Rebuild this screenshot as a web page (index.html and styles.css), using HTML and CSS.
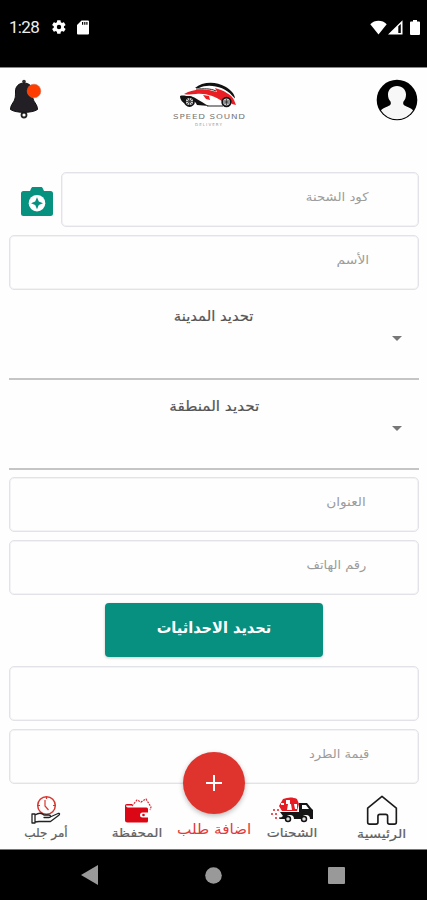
FILE: index.html
```html
<!DOCTYPE html>
<html lang="ar">
<head>
<meta charset="utf-8">
<title>Speed Sound Delivery</title>
<meta name="viewport" content="width=device-width, initial-scale=1">
<link rel="stylesheet" href="styles.css">
</head>
<body>
<div class="status">
  <span class="clock">1:28</span>
  <svg class="gear" width="16" height="16" viewBox="0 0 24 24"><path fill="#fff" fill-rule="evenodd" d="M19.4 13c.1-.7.1-1.300 0-2l2.200-1.700c.2-.1.200-.4.100-.6l-2.100-3.600c-.1-.2-.4-.3-.6-.2l-2.600 1c-.5-.4-1.100-.8-1.700-1L14.300 2.200c0-.2-.2-.4-.5-.4h-4c-.3 0-.5.2-.5.4L8.900 4.900c-.6.2-1.200.6-1.700 1l-2.600-1c-.2-.1-.5 0-.6.2L1.900 8.700c-.1.2-.1.500.1.600L4.200 11c-.1.700-.1 1.300 0 2L2 14.700c-.2.100-.2.400-.1.600L4 18.900c.1.200.4.300.6.200l2.600-1c.5.400 1.100.8 1.700 1l.4 2.700c0 .2.200.4.500.4h4c.3 0 .5-.2.500-.4l.4-2.700c.6-.2 1.200-.6 1.700-1l2.600 1c.2.100.5 0 .6-.2l2.100-3.600c.1-.2.100-.5-.1-.6zM12 15.300a3.300 3.300 0 1 1 0-6.600 3.300 3.300 0 0 1 0 6.600z"/></svg>
  <svg class="card" width="12" height="15" viewBox="0 0 12 15"><path fill="#fff" fill-rule="evenodd" d="M4.500.5H11a1 1 0 0 1 1 1V13.500a1 1 0 0 1-1 1H1a1 1 0 0 1-1-1V5zM5 2v2.800h1.200V2zm2.200 0v2.800h1.200V2zm2.100 0v2.800h1.200V2z"/></svg>
  <svg class="wifi" width="17" height="15" viewBox="0 0 17 15"><path fill="#fff" d="M8.500 14.500.3 4.300C4.500-.3 12.500-.3 16.700 4.300z"/></svg>
  <svg class="signal" width="15" height="15" viewBox="0 0 15 15"><path fill="#fff" fill-rule="evenodd" d="M0 14.500 14.500.3V14.500zM10.300 6.300V13h2.500V4z"/></svg>
  <svg class="battery" width="10" height="15" viewBox="0 0 10 15"><path fill="#fff" d="M3 0h4v1.600h2a1 1 0 0 1 1 1V14a1 1 0 0 1-1 1H1a1 1 0 0 1-1-1V2.600a1 1 0 0 1 1-1h2z"/></svg>
</div>

<header class="top">
  <svg class="bell" width="32" height="40" viewBox="0 0 32 40">
    <circle cx="14" cy="2.500" r="1.800" fill="#333"/><circle cx="14" cy="36" r="2.500" fill="none" stroke="#222" stroke-width="1.800"/>
    <path fill="#222024" stroke="#111" d="M14 4C9 4 5.500 7.500 5.500 12c0 6 0 8-2.700 12C1.200 26.500.5 28 .5 30.500c3 2 8 2.800 13.500 2.800s10.500-.8 13.500-2.800c0-2.500-.7-4-2.300-6.500C22.500 20 22.500 18 22.500 12c0-4.500-3.500-8-8.500-8z"/>
    <circle cx="24" cy="12" r="6.800" fill="#ff3d00" stroke="#d76645" stroke-width=".6"/>
  </svg>
  <div class="brand">
    <svg width="60" height="26" viewBox="0 0 60 26">
      <path fill="#111" d="M16 6C23-.5 37-1 46 4.500c6 3.500 10 8 10 12l-3-3C46 5 30 1 20 6zM1 14c3-1 6 0 7 0 8 0 12 5 22 10l-12-1c-2-5-8-7-11-1-3-1-6-4-6-8z"/>
      <path fill="#e91e24" d="M5 12C14 7 25 6 38 10l-2-4c8 2 17 7 19 12l2 5-4-1c-2-5-7-7-10-3-8-5-16-8-26-7-4 .4-8 1-12 0zM24 13l3 4 4 1-1-4z"/>
      <path fill="none" stroke="#222" d="M17 7c8 0 14-1 20 2M28 24h16"/>
      <circle cx="10.500" cy="19.500" r="4.500" fill="#ccc" stroke="#111" stroke-width="1.800"/><path stroke="#333" stroke-width=".8" d="M10.500 16v7M7 19.500h7M8 17l5 5M13 17l-5 5"/>
      <circle cx="47.500" cy="20" r="4.300" fill="#ccc" stroke="#111" stroke-width="1.800"/><path stroke="#333" stroke-width=".8" d="M47.500 17v6M44.500 20h6M45.500 18l4 4M49.500 18l-4 4"/>
    </svg>
    <span class="brand-name">SPEED SOUND</span>
    <span class="brand-sub">DELIVERY</span>
  </div>
  <svg class="avatar" width="42" height="42" viewBox="0 0 42 42"><circle cx="21" cy="21" r="20.300"/><path fill="#f7f7f7" d="M21 7c5.500 0 9 3.700 9 8.500 0 3-.8 5-2.500 7-1 3 .3 3.800 3 5 3.300 1.400 6 2.500 6.500 4a19 19 0 0 1-32 0c.5-1.500 3.200-2.600 6.500-4 2.700-1.200 4-2 3-5-1.700-2-2.500-4-2.500-7C12 10.700 15.500 7 21 7z"/></svg>
</header>

<main class="form">
  <div class="scan-row">
    <svg class="camera" width="32" height="29" viewBox="0 0 32 29"><path fill="#07917f" d="M10 1.800C10.500.6 11 0 12 0h8c1 0 1.500.6 2 1.800L23 4h6.500A2.500 2.500 0 0 1 32 6.500v20a2.500 2.500 0 0 1-2.500 2.500h-27A2.500 2.500 0 0 1 0 26.500v-20A2.500 2.500 0 0 1 2.500 4H9z"/><circle cx="16" cy="16.200" r="8.300" fill="#fff"/><path fill="#07917f" d="m16 10.200 1.800 4.200 4.200 1.800-4.200 1.800-1.800 4.200-1.800-4.200-4.200-1.800 4.200-1.800z"/></svg>
    <div class="field"><span class="hint hint-code">كود الشحنة</span></div>
  </div>
  <div class="field"><span class="hint hint-name">الأسم</span></div>
  <div class="select"><span class="label label-city">تحديد المدينة</span><i class="caret"></i></div>
  <div class="select last"><span class="label label-area">تحديد المنطقة</span><i class="caret"></i></div>
  <div class="field inset"><span class="hint hint-address">العنوان</span></div>
  <div class="field inset"><span class="hint hint-phone">رقم الهاتف</span></div>
  <div class="locate"><span class="locate-text">تحديد الاحداثيات</span></div>
  <div class="field"></div>
  <div class="field"><span class="hint hint-value">قيمة الطرد</span></div>
</main>

<nav class="tabs">
  <div class="tab">
    <svg width="30" height="30" viewBox="0 0 30 30"><circle cx="15.500" cy="10.500" r="8.800" fill="none" stroke="#d9352f" stroke-width="1.500"/><path fill="none" stroke="#d9352f" stroke-width="1.200" d="M14 5v6l3.500 4M15.500 2v2M7 10.500h2M22 10.500h2"/><path fill="#fff" stroke="#222" stroke-width="1.300" stroke-linejoin="round" d="M1 19h3v9H1zM4 20c4-2.500 7-2 9 0h5c2 0 2 2.500 0 2.500h-5 5l9-4c2-.5 2 1 .5 2l-8 6H8l-4 .5z"/></svg>
    <span class="tab-text t-pickup">أمر جلب</span>
  </div>
  <div class="tab">
    <svg width="30" height="30" viewBox="0 0 30 30"><path fill="#fff" stroke="#d62b36" stroke-width="1.200" stroke-dasharray="2 1" d="m9 11 5-6 4 2 5-3 5 8-1 3"/><path fill="#dc0714" d="M3 10.500c0 1.500 1 2 3 2h17.500a1.500 1.500 0 0 1 1.500 1.500v3.500h-5.500a2.500 2.500 0 0 0 0 5H25v3.500a1.500 1.500 0 0 1-1.500 1.500h-19A2.500 2.500 0 0 1 2 25V11c0-1.200.6-2 2-2h5v1.500z"/><circle cx="20.500" cy="20" r="1.300" fill="#dc0714"/></svg>
    <span class="tab-text t-wallet">المحفظة</span>
  </div>
  <div class="tab tab-add">
    <div class="fab"><svg width="16" height="16" viewBox="0 0 16 16"><path stroke="#fff" stroke-width="2" d="M8 0v16M0 8h16"/></svg></div>
    <span class="tab-text t-add">اضافة طلب</span>
  </div>
  <div class="tab">
    <svg width="44" height="30" viewBox="0 0 44 30"><path fill="#e51c23" d="M13 4c5-2 10-2 14 0l2 5-2 7H12l-3-5z"/><path fill="#fff" d="M16 5h4v4h-4zM18 9h3l1 6h-5zM11 8h3v2h-3zM24 9h3v5h-2z"/><path fill="none" stroke="#e51c23" stroke-width="1.500" stroke-dasharray="2 2" d="M3 15h7M1 19h7M5 23h7"/><path fill="#151515" d="M10 17h19V8h8l4 5 2 2v9h-3a4 4 0 0 0-8 0h-8a4 4 0 0 0-8 0H9l4-3z"/><path fill="#fff" d="M32 10h4l3 4h-7z"/><circle cx="18" cy="24" r="2.500" fill="#ddd" stroke="#111" stroke-width="1.500"/><circle cx="34" cy="24" r="2.500" fill="#ddd" stroke="#111" stroke-width="1.500"/></svg>
    <span class="tab-text t-ship">الشحنات</span>
  </div>
  <div class="tab">
    <svg width="32" height="31" viewBox="0 0 32 32"><path fill="none" stroke="#1b1b1b" stroke-width="1.700" stroke-linejoin="round" d="M1.200 13.500 16 1.500l14.800 12V28a2 2 0 0 1-2 2h-5a2 2 0 0 1-2-2v-6a2 2 0 0 0-2-2h-6a2 2 0 0 0-2 2v6a2 2 0 0 1-2 2h-6.600a2 2 0 0 1-2-2z"/></svg>
    <span class="tab-text t-home">الرئيسية</span>
  </div>
</nav>

<div class="system">
  <svg width="17" height="20" viewBox="0 0 17 20"><path fill="#999" d="M0 10 17 0v20z"/></svg>
  <svg width="17" height="17" viewBox="0 0 17 17"><circle cx="8.500" cy="8.500" r="8.300" fill="#999"/></svg>
  <svg width="17" height="17" viewBox="0 0 17 17"><rect width="17" height="17" rx="1" fill="#999"/></svg>
</div>
</body>
</html>
```
FILE: styles.css
```css
* { box-sizing: border-box; }
body {
  margin: 0;
  width: 427px;
  height: 900px;
  overflow: hidden;
  display: flex;
  flex-direction: column;
  background: #fefefe;
  font-family: "DejaVu Sans", sans-serif;
}
svg { display: block; flex: none; }

.status {
  height: 68px;
  flex: none;
  display: flex;
  align-items: center;
  padding: 0 7px 13px 9px;
  background: #000;
  border-bottom: 1px solid #888;
}
.clock { width: 42px; color: #eee; font: 17px/20px Roboto, sans-serif; letter-spacing: -.7px; }
.card { margin-left: 10px; }
.wifi { margin-left: auto; }
.signal { margin-left: 1px; }
.battery { margin-left: 7px; }

.top {
  height: 104px;
  flex: none;
  display: flex;
  justify-content: space-between;
  align-items: flex-start;
  padding: 11px 9px 0 10px;
}
.brand { display: flex; flex-direction: column; align-items: center; padding: 3px 0 0; }
.brand-name {
  margin-top: 3px;
  color: #777;
  font: 8px/11px "DejaVu Sans", sans-serif;
  letter-spacing: .8px;
  white-space: nowrap;
  transform: scale(1.09, .85);
}
.brand-sub { color: #999; font: 4px/5px "DejaVu Sans", sans-serif; letter-spacing: 1.1px; }

.form { height: 612px; flex: none; padding: 0 8px 0 9px; }
.scan-row { display: flex; align-items: flex-start; gap: 8px; padding-left: 12px; }
.scan-row .camera { margin-top: 15px; }
.scan-row .field { flex: 1; }
.field {
  height: 55px;
  margin-bottom: 8px;
  padding: 14px 49px 0 10px;
  display: flex;
  justify-content: flex-end;
  border: 1px solid #e2e3e8;
  border-radius: 5px;
  box-shadow: inset 0 0 0 1px #f3f3f6;
}
.field.inset { padding-right: 52px; }
.hint {
  color: #9c9c9c;
  font-size: 12px;
  line-height: 20px;
  direction: rtl;
  white-space: nowrap;
  transform-origin: right;
}
.hint-code { transform: scaleX(1.11); }
.hint-name { transform: scaleX(1.16); }
.hint-address { transform: scaleX(1.14); }
.hint-phone { transform: scaleX(1.08); }
.hint-value { transform: scaleX(1.09); }

.select {
  height: 82px;
  margin-bottom: 8px;
  display: flex;
  flex-direction: column;
  align-items: center;
  border-bottom: 2px solid #c5c5c5;
}
.select.last { margin-bottom: 7px; }
.label { margin-top: 8px; color: #555; font-size: 14px; line-height: 20px; direction: rtl; -webkit-text-stroke: .2px #555; }
.label-city { transform: scaleX(1.06); }
.label-area { transform: scaleX(1.09); }
.caret {
  align-self: flex-end;
  margin: 10px 17px 0 0;
  border: 5px solid transparent;
  border-top-color: #777;
  border-bottom: 0;
}
.locate {
  width: 218px;
  height: 54px;
  margin: 0 auto 9px;
  display: flex;
  justify-content: center;
  padding-top: 13px;
  background: #079080;
  border-radius: 4px;
  box-shadow: 0 1px 3px #0003;
}
.locate-text { color: #fff; font-size: 16px; font-weight: 700; line-height: 24px; direction: rtl; transform: scaleX(.91); }

.tabs {
  height: 65px;
  flex: none;
  display: grid;
  grid-template-columns: 92px 91px 62px 94px 86px;
  padding-top: 11px;
  position: relative;
}
.tab { height: 46px; display: flex; flex-direction: column; align-items: center; justify-content: space-between; }
.tab-text { color: #606060; font-size: 12px; line-height: 16px; direction: rtl; white-space: nowrap; -webkit-text-stroke: .2px #606060; }
.t-wallet, .t-ship { transform: scaleX(1.15); }
.t-home { transform: scaleX(1.19); }
.tab-add { justify-content: flex-end; }
.tab-add .tab-text { color: #e13a3c; font-size: 14px; line-height: 24px; transform: scaleX(1.09); -webkit-text-stroke: 0; }
.fab {
  position: absolute;
  left: 183px;
  top: -32px;
  width: 62px;
  height: 62px;
  display: grid;
  place-items: center;
  border-radius: 50%;
  background: #df342d;
  box-shadow: 0 2px 5px #0004;
}

.system {
  height: 51px;
  flex: none;
  display: flex;
  align-items: center;
  justify-content: space-between;
  padding: 0 82px 0 81px;
  background: #000;
  border-top: 1px solid #777;
}
```
